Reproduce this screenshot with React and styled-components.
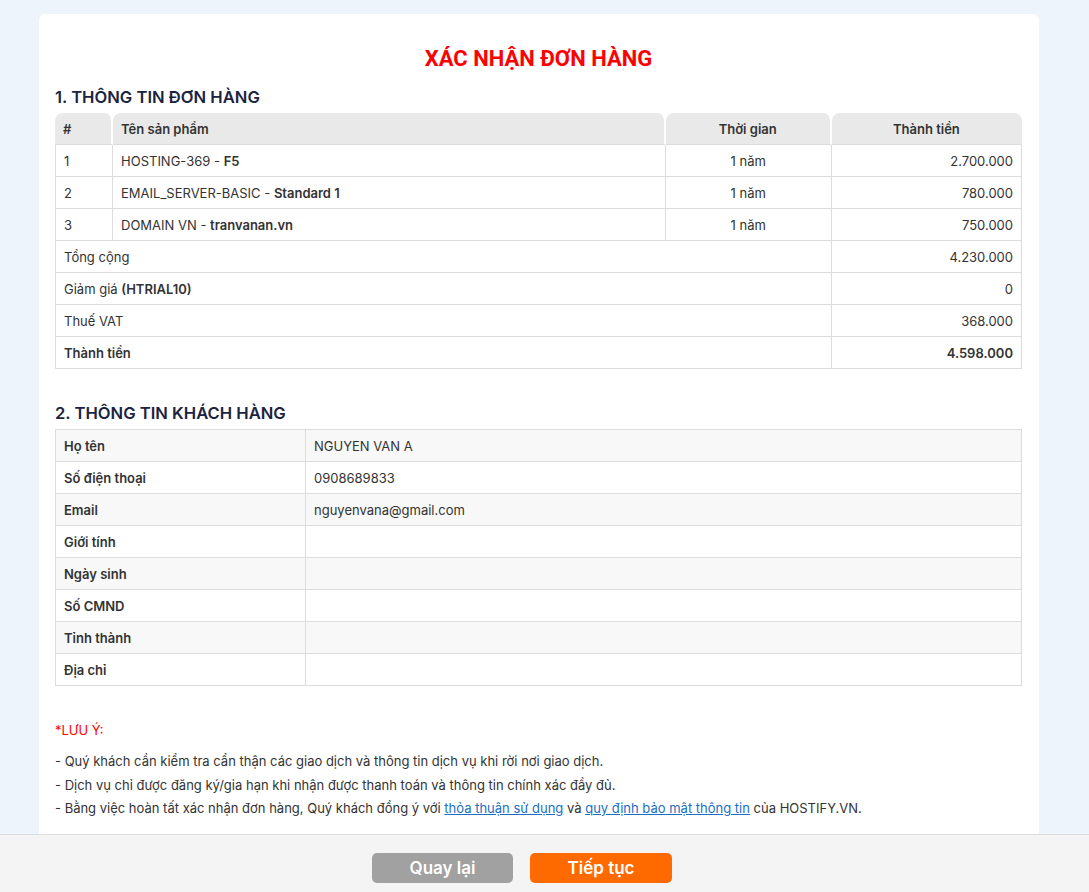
import React from "react";
import styled, { createGlobalStyle } from "styled-components";

const Global = createGlobalStyle`
  html, body { margin: 0; padding: 0; }
  body {
    background: #edf4fb;
    font-family: Inter, "Noto Sans", sans-serif;
    font-size: 13px;
    color: #333;
  }
`;

const Page = styled.div`
  padding: 14px 0 0 39px;
  min-height: 878px;
`;

const Card = styled.div`
  width: 1000px;
  box-sizing: border-box;
  background: #fff;
  border-radius: 6px;
  padding: 31px 17px 80px 16px;
`;

const Title = styled.h1`
  margin: 0 0 13px;
  text-align: center;
  color: #ff0000;
  font-family: Roboto, "Liberation Sans", sans-serif;
  font-weight: 700;
  font-size: 22px;
  line-height: 28px;
`;

const Heading = styled.h2`
  margin: ${(p) => p.$top || 0}px 0 5px;
  color: #1b2340;
  font-size: 16.6px;
  font-weight: 600;
  line-height: 22px;
`;

const Table = styled.table`
  width: 100%;
  border-collapse: separate;
  border-spacing: 0;
  table-layout: fixed;
`;

const Th = styled.th`
  background: #e9e9e9;
  border-radius: 8px 8px 0 0;
  border-right: ${(p) => (p.$last ? "1px solid #e9e9e9" : "2px solid #fff")};
  border-bottom: 1px solid #dcdcdc;
  height: 31px;
  padding: 0 8px;
  font-weight: 600;
  font-size: 13px;
  color: #333;
  text-align: ${(p) => p.$align || "left"};
`;

const Td = styled.td`
  height: 31px;
  padding: 0 8px;
  border-bottom: 1px solid #dcdcdc;
  border-right: 1px solid #dcdcdc;
  &:first-child { border-left: 1px solid #dcdcdc; }
  text-align: ${(p) => p.$align || "left"};
  font-weight: ${(p) => (p.$bold ? 600 : 400)};
  color: #333;
`;

const Row = styled.tr`
  background: ${(p) => (p.$striped ? "#f8f8f8" : "#fff")};
`;

const Label = styled(Td)`
  font-weight: 600;
`;

const Strong = styled.b`
  font-weight: 600;
`;

const InfoTable = styled(Table)`
  border-top: 1px solid #dcdcdc;
`;

const Note = styled.div`
  margin-top: 35px;
`;

const NoteTitle = styled.div`
  color: #ff0000;
  font-size: 13px;
  line-height: 18px;
  margin-bottom: 11px;
`;

const NoteLine = styled.div`
  font-size: 13px;
  line-height: 23.5px;
  color: #333;
`;

const Link = styled.a`
  color: #1a6fc4;
  text-decoration: underline;
`;

const Footer = styled.div`
  position: fixed;
  left: 0;
  right: 0;
  bottom: 0;
  height: 58px;
  background: #f4f4f4;
  border-top: 1px solid #dedede;
  display: flex;
  justify-content: center;
  align-items: flex-start;
  gap: 17px;
  padding: 18px 45px 0 0;
  box-sizing: border-box;
`;

const Button = styled.button`
  width: ${(p) => p.$w}px;
  height: 30px;
  border: none;
  border-radius: 5px;
  background: ${(p) => p.$bg};
  color: #fff;
  font-family: Inter, "Noto Sans", sans-serif;
  font-size: 17px;
  font-weight: 600;
  cursor: pointer;
`;

const items = [
  { id: 1, name: "HOSTING-369 - ", strong: "F5", time: "1 năm", price: "2.700.000" },
  { id: 2, name: "EMAIL_SERVER-BASIC - ", strong: "Standard 1", time: "1 năm", price: "780.000" },
  { id: 3, name: "DOMAIN VN - ", strong: "tranvanan.vn", time: "1 năm", price: "750.000" },
];

const customer = [
  ["Họ tên", "NGUYEN VAN A"],
  ["Số điện thoại", "0908689833"],
  ["Email", "nguyenvana@gmail.com"],
  ["Giới tính", ""],
  ["Ngày sinh", ""],
  ["Số CMND", ""],
  ["Tỉnh thành", ""],
  ["Địa chỉ", ""],
];

export default function App() {
  return (
    <>
      <Global />
      <Page>
        <Card>
          <Title>XÁC NHẬN ĐƠN HÀNG</Title>
          <Heading>1. THÔNG TIN ĐƠN HÀNG</Heading>
          <Table>
            <colgroup>
              <col style={{ width: 58 }} />
              <col style={{ width: 552 }} />
              <col style={{ width: 166 }} />
              <col style={{ width: 190 }} />
            </colgroup>
            <thead>
              <tr>
                <Th>#</Th>
                <Th>Tên sản phẩm</Th>
                <Th $align="center">Thời gian</Th>
                <Th $align="center" $last>Thành tiền</Th>
              </tr>
            </thead>
            <tbody>
              {items.map((it) => (
                <Row key={it.id}>
                  <Td>{it.id}</Td>
                  <Td>
                    {it.name}
                    <Strong>{it.strong}</Strong>
                  </Td>
                  <Td $align="center">{it.time}</Td>
                  <Td $align="right">{it.price}</Td>
                </Row>
              ))}
              <Row>
                <Td colSpan={3}>Tổng cộng</Td>
                <Td $align="right">4.230.000</Td>
              </Row>
              <Row>
                <Td colSpan={3}>
                  Giảm giá <Strong>(HTRIAL10)</Strong>
                </Td>
                <Td $align="right">0</Td>
              </Row>
              <Row>
                <Td colSpan={3}>Thuế VAT</Td>
                <Td $align="right">368.000</Td>
              </Row>
              <Row>
                <Td colSpan={3} $bold>Thành tiền</Td>
                <Td $align="right" $bold>4.598.000</Td>
              </Row>
            </tbody>
          </Table>

          <Heading $top={33}>2. THÔNG TIN KHÁCH HÀNG</Heading>
          <InfoTable>
            <colgroup>
              <col style={{ width: 251 }} />
              <col />
            </colgroup>
            <tbody>
              {customer.map(([k, v], i) => (
                <Row key={k} $striped={i % 2 === 0}>
                  <Label>{k}</Label>
                  <Td>{v}</Td>
                </Row>
              ))}
            </tbody>
          </InfoTable>

          <Note>
            <NoteTitle>*LƯU Ý:</NoteTitle>
            <NoteLine>- Quý khách cần kiểm tra cẩn thận các giao dịch và thông tin dịch vụ khi rời nơi giao dịch.</NoteLine>
            <NoteLine>- Dịch vụ chỉ được đăng ký/gia hạn khi nhận được thanh toán và thông tin chính xác đầy đủ.</NoteLine>
            <NoteLine>
              - Bằng việc hoàn tất xác nhận đơn hàng, Quý khách đồng ý với <Link href="#">thỏa thuận sử dụng</Link> và{" "}
              <Link href="#">quy định bảo mật thông tin</Link> của HOSTIFY.VN.
            </NoteLine>
          </Note>
        </Card>
      </Page>
      <Footer>
        <Button $w={141} $bg="#a1a1a1">Quay lại</Button>
        <Button $w={142} $bg="#ff6a00">Tiếp tục</Button>
      </Footer>
    </>
  );
}
